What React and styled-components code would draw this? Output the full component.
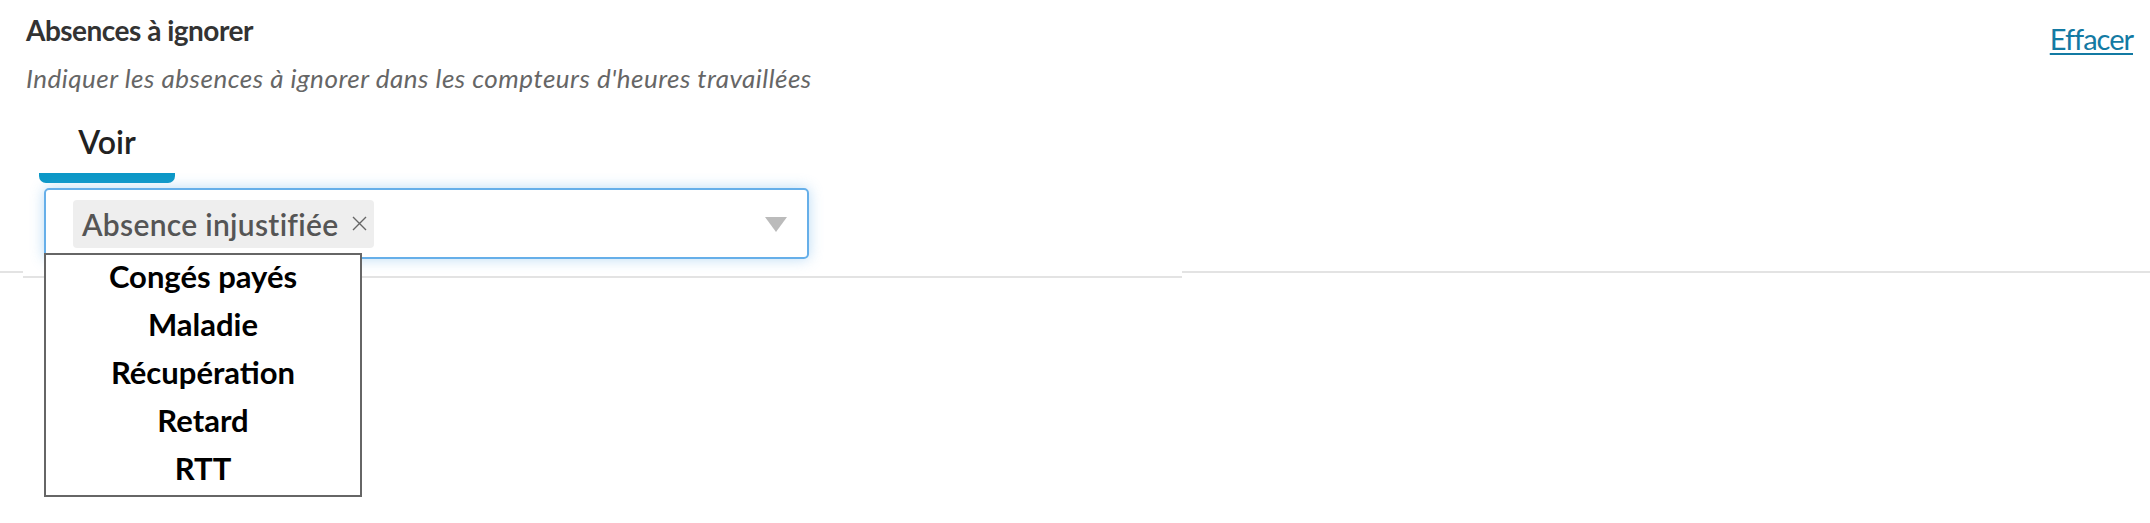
import React from 'react';
import styled, { createGlobalStyle } from 'styled-components';

const GlobalStyle = createGlobalStyle`
  html, body {
    margin: 0;
    background: #fff;
    font-family: Lato, "Noto Sans", sans-serif;
  }
  #root {
    min-height: 100vh;
  }
`;

const Section = styled.section`
  display: flex;
  justify-content: space-between;
  align-items: flex-start;
  border-bottom: 2px solid #e3e3e3;
`;

const Panel = styled.div`
  width: 1159px;
  margin-left: 23px;
  margin-bottom: -7px;
  padding: 14px 0 17px;
  background: #fff;
  border-bottom: 2px solid #e3e3e3;
`;

const Title = styled.h3`
  margin: 0 0 0 3px;
  font-size: 28px;
  line-height: 1.2;
  font-weight: 700;
  letter-spacing: -0.5px;
  color: #333;
`;

const Description = styled.p`
  margin: 15px 0 0 3px;
  font-size: 26px;
  line-height: 1.2;
  font-style: italic;
  letter-spacing: 0.5px;
  color: #666;
`;

const Tabs = styled.div`
  display: flex;
  margin: 29px 0 0 16px;
`;

const Tab = styled.div`
  width: 136px;
  display: flex;
  flex-direction: column;
  align-items: center;
  font-size: 32px;
  line-height: 1.2;
  font-weight: 600;
  color: #222;
`;

const Indicator = styled.span`
  align-self: stretch;
  height: 10px;
  margin-top: 12px;
  background: #0c98c7;
  border-radius: 0 0 7px 7px;
`;

const Select = styled.div`
  position: relative;
  width: 765px;
  height: 71px;
  box-sizing: border-box;
  margin: 5px 0 0 21px;
  padding: 0 20px 0 27px;
  display: flex;
  align-items: center;
  justify-content: space-between;
  border: 2px solid #66afe9;
  border-radius: 5px;
  box-shadow: 0 0 14px rgba(102, 175, 233, 0.45);
`;

const Chip = styled.span`
  display: inline-flex;
  align-items: center;
  gap: 14px;
  height: 48px;
  padding: 0 7px 0 9px;
  border-radius: 4px;
  background: #eee;
  font-size: 30px;
  font-weight: 600;
  letter-spacing: 0.3px;
  color: #555;
`;

const Arrow = styled.span`
  width: 0;
  height: 0;
  border-left: 11px solid transparent;
  border-right: 11px solid transparent;
  border-top: 15px solid #bbb;
  margin-top: 2px;
`;

const Menu = styled.ul`
  position: absolute;
  top: 63px;
  left: -2px;
  width: 318px;
  box-sizing: border-box;
  margin: 0;
  padding: 0;
  list-style: none;
  background: #fff;
  border: 2px solid #666;
  z-index: 2;
`;

const Option = styled.li`
  text-align: center;
  font-size: 31px;
  line-height: 42px;
  padding-bottom: 6px;
  font-weight: 700;
  color: #000;
`;

const ClearLink = styled.a`
  margin: 22px 17px 0 0;
  font-size: 29px;
  line-height: 1.2;
  letter-spacing: -1px;
  color: #137aa3;
  text-decoration: underline;
  text-underline-offset: 3px;
  cursor: pointer;
`;

const CloseIcon = () => (
  <svg width="15" height="15" viewBox="0 0 15 15">
    <path d="M1 1 L14 14 M14 1 L1 14" stroke="#666" strokeWidth="1.4" fill="none" />
  </svg>
);

const options = ['Congés payés', 'Maladie', 'Récupération', 'Retard', 'RTT'];

export default function App() {
  return (
    <>
      <GlobalStyle />
      <Section>
        <Panel>
          <Title>Absences à ignorer</Title>
          <Description>Indiquer les absences à ignorer dans les compteurs d'heures travaillées</Description>
          <Tabs>
            <Tab>
              Voir
              <Indicator />
            </Tab>
          </Tabs>
          <Select>
            <Chip>
              Absence injustifiée
              <CloseIcon />
            </Chip>
            <Arrow />
            <Menu>
              {options.map(option => (
                <Option key={option}>{option}</Option>
              ))}
            </Menu>
          </Select>
        </Panel>
        <ClearLink>Effacer</ClearLink>
      </Section>
    </>
  );
}
